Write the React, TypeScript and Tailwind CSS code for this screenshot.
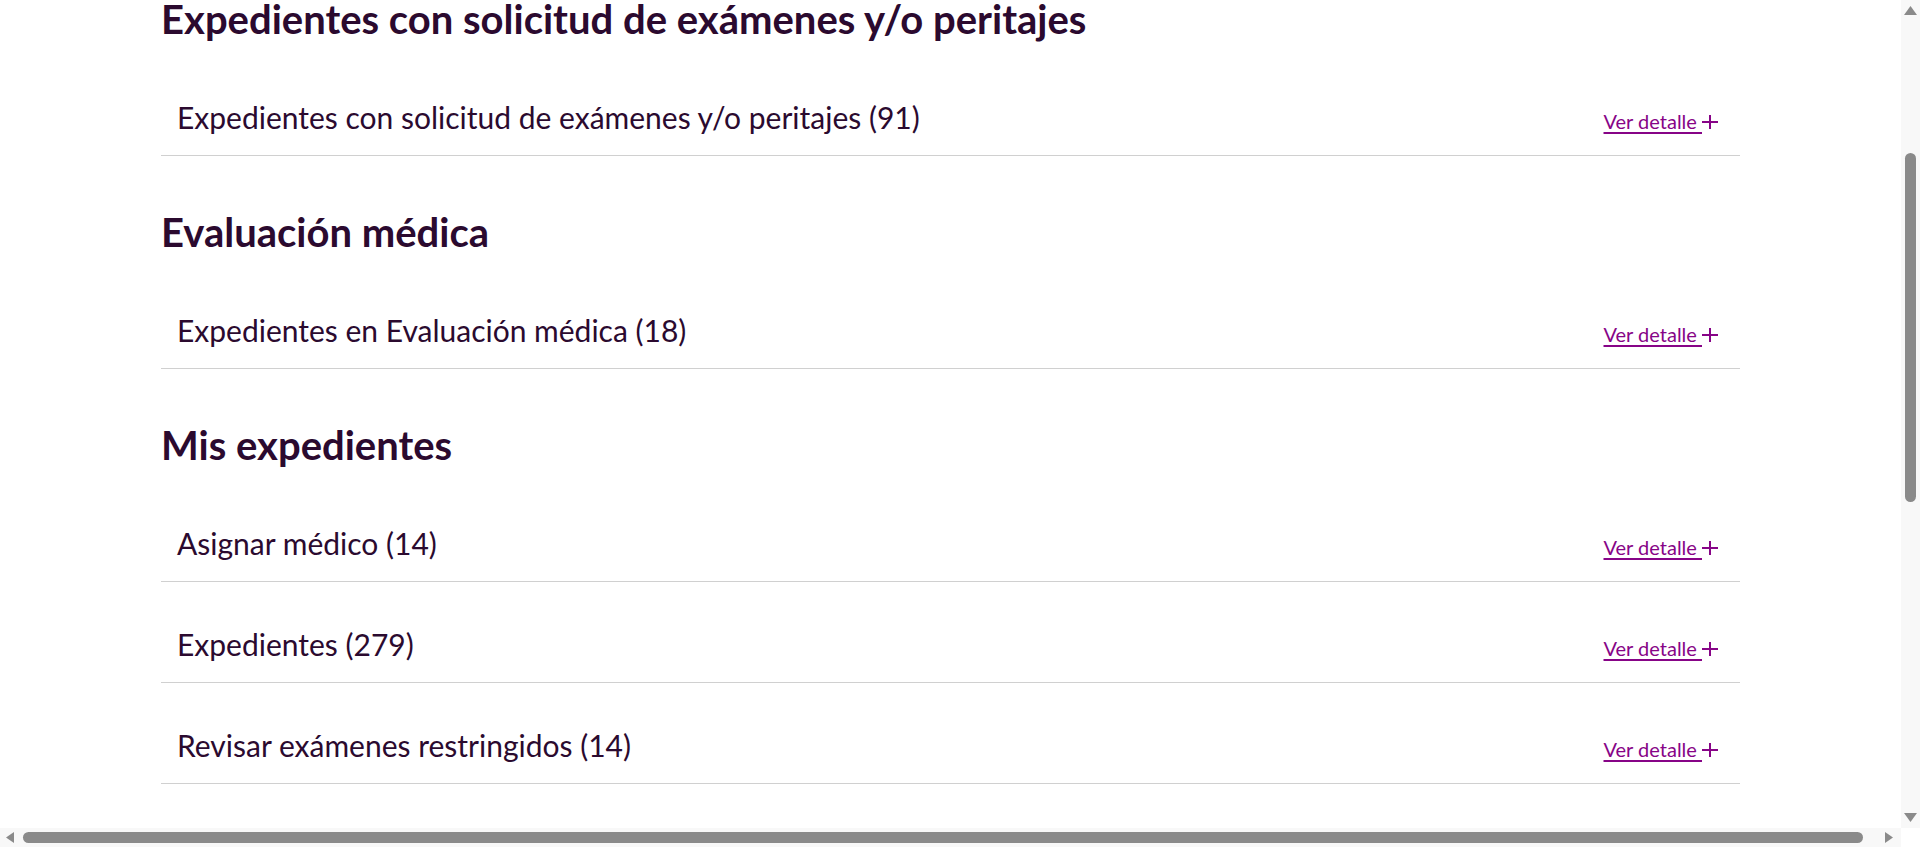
const sections = [
  {
    title: "Expedientes con solicitud de exámenes y/o peritajes",
    items: ["Expedientes con solicitud de exámenes y/o peritajes (91)"],
  },
  {
    title: "Evaluación médica",
    items: ["Expedientes en Evaluación médica (18)"],
  },
  {
    title: "Mis expedientes",
    items: [
      "Asignar médico (14)",
      "Expedientes (279)",
      "Revisar exámenes restringidos (14)",
    ],
  },
];

function PlusIcon() {
  return (
    <svg width="16" height="14" viewBox="0 0 16 14" className="inline-block">
      <path d="M0 7H16M8 0V14" stroke="currentColor" strokeWidth="2" />
    </svg>
  );
}

function Row({ label }: { label: string }) {
  return (
    <div className="flex items-baseline justify-between border-b border-[#d0d0d0] pt-[44px] pb-[20px] pl-4 pr-[22px]">
      <span className="text-[30px] leading-[1.2]">{label}</span>
      <a href="#" className="flex items-baseline text-[20px] leading-[1.2] text-[#870487]">
        <span className="underline decoration-[1.5px] underline-offset-[3px]">Ver detalle&nbsp;</span>
        <PlusIcon />
      </a>
    </div>
  );
}

function Triangle({ dir }: { dir: "up" | "down" | "left" | "right" }) {
  if (dir === "up")
    return (
      <svg width="13" height="9" viewBox="0 0 13 9">
        <polygon points="6.5,0 13,9 0,9" fill="#8a8a8a" />
      </svg>
    );
  if (dir === "down")
    return (
      <svg width="13" height="9" viewBox="0 0 13 9">
        <polygon points="0,0 13,0 6.5,9" fill="#8a8a8a" />
      </svg>
    );
  if (dir === "left")
    return (
      <svg width="8" height="11" viewBox="0 0 8 11">
        <polygon points="8,0 8,11 0,5.5" fill="#8a8a8a" />
      </svg>
    );
  return (
    <svg width="8" height="11" viewBox="0 0 8 11">
      <polygon points="0,0 8,5.5 0,11" fill="#8a8a8a" />
    </svg>
  );
}

export default function App() {
  return (
    <div className="flex h-[847px] w-full flex-col overflow-hidden bg-white font-['Lato',sans-serif] text-[#2b0a2f]">
      <div className="flex min-h-0 flex-1">
        <main className="min-w-0 flex-1 overflow-hidden">
          <div className="mx-auto w-[1579px]">
            {sections.map((section) => (
              <section key={section.title} className="mt-[57px] first:mt-0">
                <h2 className="mb-[16px] text-[40px] font-bold leading-[39px]">{section.title}</h2>
                {section.items.map((item) => (
                  <Row key={item} label={item} />
                ))}
              </section>
            ))}
          </div>
        </main>
        <div className="flex w-[19px] flex-col items-center bg-[#f8f8f8] pt-[6px]">
          <Triangle dir="up" />
          <div className="mt-[138px] h-[349px] w-[11px] rounded-full bg-[#8a8a8a]" />
          <div className="mt-[311px] flex">
            <Triangle dir="down" />
          </div>
        </div>
      </div>
      <div className="flex h-[19px]">
        <div className="flex w-[1901px] items-center bg-[#f8f8f8] pl-[6px]">
          <Triangle dir="left" />
          <div className="ml-[9px] h-[11px] w-[1840px] rounded-full bg-[#8a8a8a]" />
          <div className="ml-[22px] flex">
            <Triangle dir="right" />
          </div>
        </div>
        <div className="flex-1 bg-white" />
      </div>
    </div>
  );
}
